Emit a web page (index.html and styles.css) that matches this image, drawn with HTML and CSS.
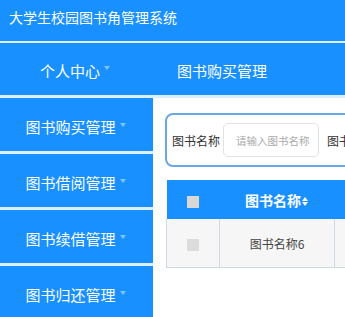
FILE: index.html
```html
<!DOCTYPE html>
<html>
<head>
  <meta name="viewport" content="width=device-width, initial-scale=1">
  <link rel="stylesheet" href="styles.css">
</head>
<body>
  <div class="header">大学生校园图书角管理系统</div>

  <div class="nav">
    <div class="nav-item first">个人中心<span class="caret"></span></div>
    <div class="nav-item">图书购买管理</div>
  </div>

  <div class="main">
    <div class="sidebar">
      <div class="side-item">图书购买管理<span class="caret"></span></div>
      <div class="side-item">图书借阅管理<span class="caret"></span></div>
      <div class="side-item">图书续借管理<span class="caret"></span></div>
      <div class="side-item">图书归还管理<span class="caret"></span></div>
    </div>

    <div class="content">
      <div class="inner">
        <div class="search">
          <label>图书名称</label>
          <input type="text" placeholder="请输入图书名称">
          <label>图书作者</label>
          <input type="text" placeholder="请输入图书作者">
        </div>

        <table class="list">
          <thead>
            <tr>
              <th class="check"><span class="box"></span></th>
              <th class="name">图书名称<span class="sort"></span></th>
              <th class="wide"></th>
            </tr>
          </thead>
          <tbody>
            <tr>
              <td class="check"><span class="box"></span></td>
              <td class="name">图书名称6</td>
              <td class="wide"></td>
            </tr>
          </tbody>
        </table>
      </div>
    </div>
  </div>
</body>
</html>
```

FILE: styles.css
```css
body {
  margin: 0;
  font-family: "Noto Sans CJK SC", "Noto Sans", sans-serif;
  background: #fff;
  overflow: hidden;
}
.header {
  height: 43px;
  box-sizing: border-box;
  padding: 7px 0 0 9px;
  background: #1890ff;
  color: #fff;
  font-size: 14px;
  line-height: 20px;
  border-bottom: 2px solid #dcefff;
}
.nav {
  display: flex;
  height: 55px;
  box-sizing: border-box;
  background: #1890ff;
  border-bottom: 3px solid #dcefff;
}
.nav-item {
  display: flex;
  align-items: center;
  padding: 2px 0 0 27px;
  color: #fff;
  font-size: 15px;
}
.nav-item.first {
  width: 150px;
  padding-left: 0;
  justify-content: center;
}
.caret {
  display: inline-block;
  width: 0;
  height: 0;
  margin: -4px 0 0 4px;
  border-left: 3px solid transparent;
  border-right: 3px solid transparent;
  border-top: 4px solid rgba(255, 255, 255, 0.45);
}
.main {
  display: flex;
}
.sidebar {
  width: 153px;
  flex: none;
}
.side-item {
  display: flex;
  align-items: center;
  justify-content: center;
  height: 56px;
  box-sizing: border-box;
  padding: 4px 2px 0 0;
  background: #1890ff;
  border-bottom: 3px solid #dcefff;
  color: #fff;
  font-size: 15px;
}
.content {
  flex: 1;
  overflow: hidden;
}
.inner {
  width: 700px;
  padding: 15px 0 0 12px;
}
.search {
  display: flex;
  align-items: center;
  height: 54px;
  box-sizing: border-box;
  padding-left: 5px;
  border: 2px solid #6aa8e4;
  border-radius: 8px;
  font-size: 12px;
  color: #333;
}
.search label {
  margin-right: 3px;
}
.search input {
  width: 96px;
  height: 34px;
  box-sizing: border-box;
  margin-right: 8px;
  padding: 0 2px 0 12px;
  border: 1px solid #e2e2e2;
  border-radius: 5px;
  font-family: inherit;
  font-size: 10.5px;
}
.search input::placeholder {
  color: #aaa;
}
.list {
  margin: 13px 0 0 1px;
  border-collapse: collapse;
  font-size: 12px;
  color: #444;
}
.list th {
  height: 39px;
  padding: 0;
  background: #1890ff;
  color: #fff;
  font-size: 14px;
  font-weight: bold;
}
.list td {
  height: 48px;
  padding: 0;
  background: #f6f6f6;
  border: 1px solid #cfd9e3;
  border-top: none;
  text-align: center;
}
.list .check {
  width: 52px;
}
.list .name {
  width: 114px;
}
.list .wide {
  width: 160px;
}
.box {
  display: inline-block;
  width: 12px;
  height: 12px;
  background: #dcdcdc;
  vertical-align: middle;
}
th .box {
  background: #d8d8d8;
}
.sort {
  display: inline-block;
  position: relative;
  width: 7px;
  height: 9px;
  margin-left: 1px;
  vertical-align: middle;
}
.sort::before, .sort::after {
  content: "";
  position: absolute;
  left: 0;
  border-left: 3.5px solid transparent;
  border-right: 3.5px solid transparent;
}
.sort::before {
  top: 0;
  border-bottom: 4px solid #fff;
}
.sort::after {
  bottom: 0;
  border-top: 4px solid #fff;
}
```
